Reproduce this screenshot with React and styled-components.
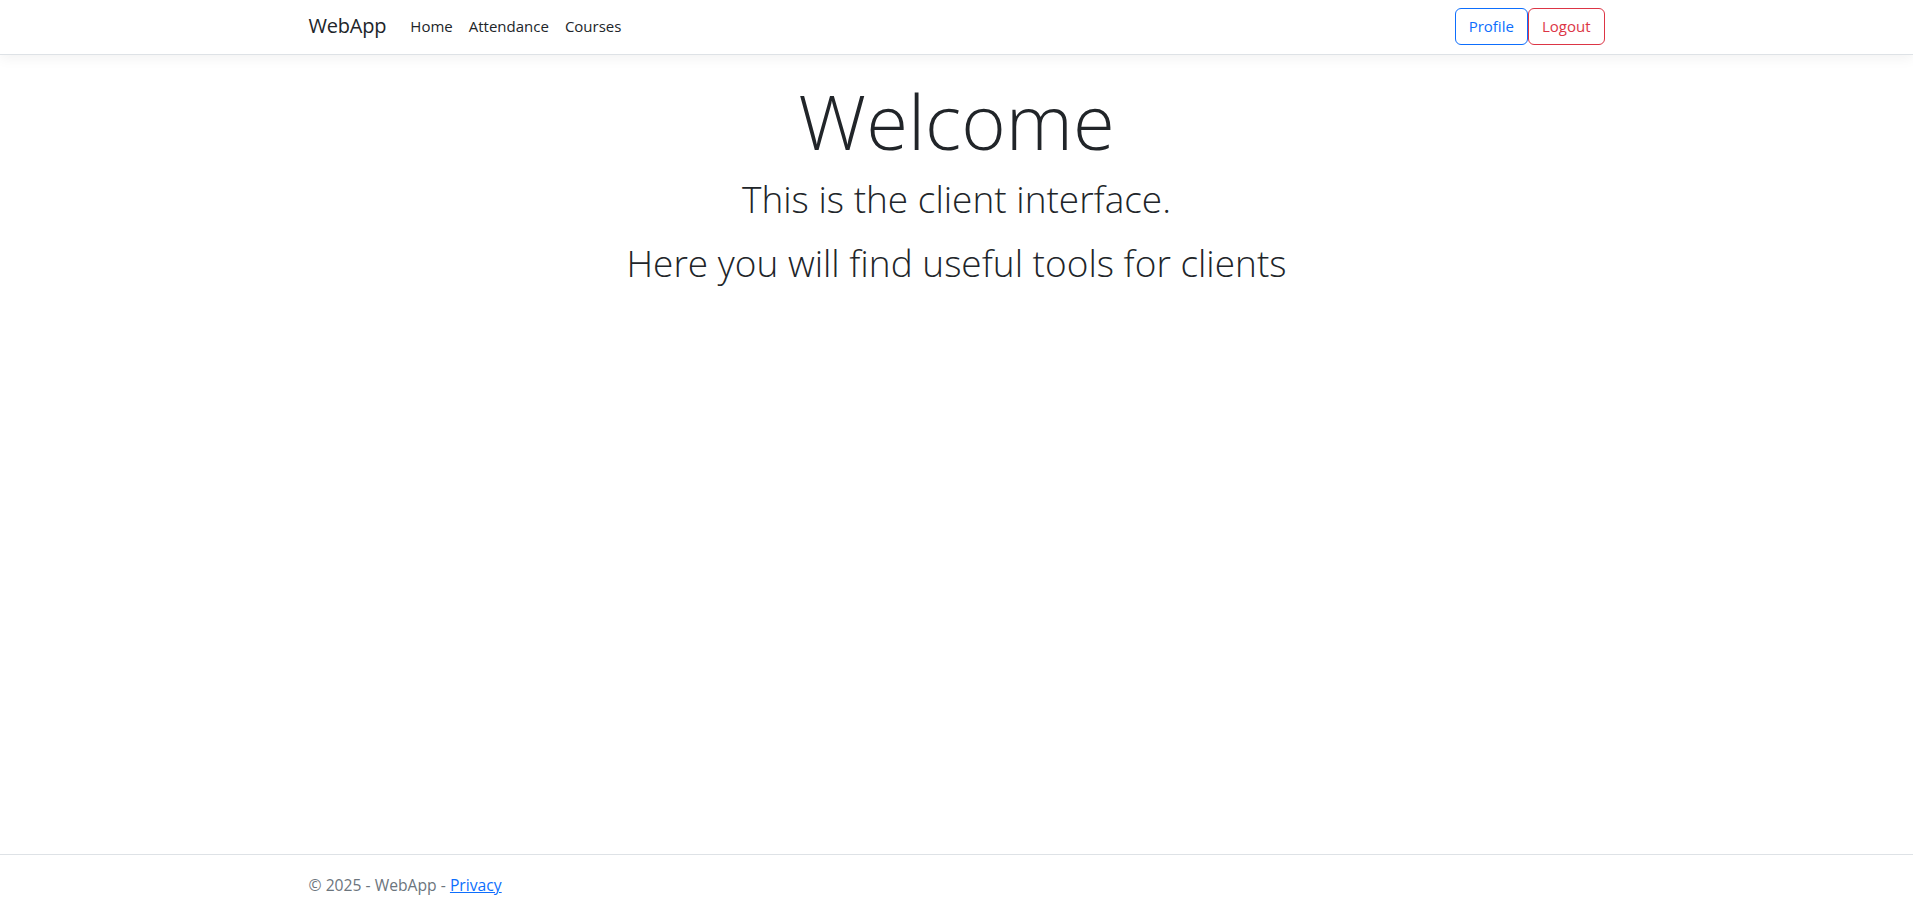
import React from 'react';
import styled, { createGlobalStyle } from 'styled-components';

const GlobalStyle = createGlobalStyle`
  html, body {
    margin: 0;
    padding: 0;
    background: #fff;
  }
  body {
    font-family: "Open Sans", "Noto Sans", "Liberation Sans", sans-serif;
    font-size: 16px;
    line-height: 1.5;
    color: #212529;
  }
  * { box-sizing: border-box; }
`;

const Page = styled.div`
  min-height: 100vh;
  display: flex;
  flex-direction: column;
`;

const Container = styled.div`
  width: 100%;
  max-width: 1320px;
  margin: 0 auto;
  padding: 0 12px;
`;

const Navbar = styled.nav`
  background: #fff;
  border-bottom: 1px solid #dee2e6;
  box-shadow: 0 4px 12px rgba(0, 0, 0, 0.05);
  height: 55px;
  margin-bottom: 16px;
`;

const NavInner = styled(Container)`
  height: 100%;
  display: flex;
  align-items: center;
  padding-bottom: 2px;
`;

const Brand = styled.a`
  font-size: 20px;
  color: #212529;
  text-decoration: none;
  margin-right: 16px;
  letter-spacing: -0.2px;
`;

const NavLinks = styled.ul`
  display: flex;
  list-style: none;
  margin: 0;
  padding: 0;
  flex: 1;
`;

const NavLink = styled.a`
  display: block;
  padding: 8px 8px;
  font-size: 15px;
  color: #212529;
  text-decoration: none;
`;

const Actions = styled.div`
  display: flex;
  align-items: center;
`;

const OutlineButton = styled.button`
  font-family: inherit;
  font-size: 15px;
  line-height: 23px;
  padding: 6px 13px;
  background: transparent;
  border: 1px solid ${p => p.tone};
  color: ${p => p.tone};
  border-radius: 6px;
  cursor: pointer;
`;

const Main = styled.main`
  flex: 1;
  padding-bottom: 16px;
  text-align: center;
`;

const Title = styled.h1`
  font-size: 76px;
  font-weight: 300;
  line-height: 96px;
  margin: 2px 0 6px;
`;

const Lead = styled.p`
  font-size: 37px;
  font-weight: 300;
  line-height: 48px;
  margin: 0 0 ${p => p.gap}px;
`;

const Footer = styled.footer`
  border-top: 1px solid #dee2e6;
  color: #6c757d;
  padding-top: 4px;
  line-height: 53px;
  white-space: nowrap;
  font-size: 15.7px;
`;

const FooterLink = styled.a`
  color: #0d6efd;
  text-decoration: underline;
`;

export default function App() {
  return (
    <Page>
      <GlobalStyle />
      <Navbar>
        <NavInner>
          <Brand href="#">WebApp</Brand>
          <NavLinks>
            <li><NavLink href="#">Home</NavLink></li>
            <li><NavLink href="#">Attendance</NavLink></li>
            <li><NavLink href="#">Courses</NavLink></li>
          </NavLinks>
          <Actions>
            <OutlineButton tone="#0d6efd">Profile</OutlineButton>
            <OutlineButton tone="#dc3545">Logout</OutlineButton>
          </Actions>
        </NavInner>
      </Navbar>
      <Main>
        <Container>
          <Title>Welcome</Title>
          <Lead gap={16}>This is the client interface.</Lead>
          <Lead gap={16}>Here you will find useful tools for clients</Lead>
        </Container>
      </Main>
      <Footer>
        <Container>
          &copy; 2025 - WebApp - <FooterLink href="#">Privacy</FooterLink>
        </Container>
      </Footer>
    </Page>
  );
}
